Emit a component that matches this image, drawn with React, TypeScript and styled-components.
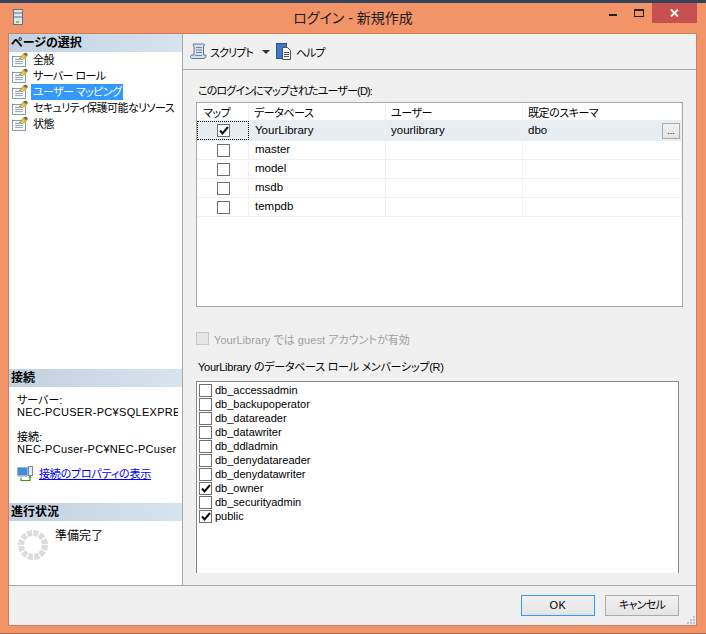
import React from 'react';
import styled, { createGlobalStyle } from 'styled-components';

const GlobalStyle = createGlobalStyle`
  html, body {
    margin: 0;
    padding: 0;
    background: #f39468;
  }
  * {
    box-sizing: border-box;
  }
`;

const Window = styled.div`
  width: 706px;
  height: 634px;
  display: flex;
  flex-direction: column;
  background: #f39468;
  border-top: 3px solid #34435a;
  border-bottom: 1px solid #a5684c;
  font-family: "Liberation Sans", "Noto Sans CJK JP", sans-serif;
  font-feature-settings: "palt";
  font-size: 11px;
  color: #000;
  overflow: hidden;
`;

const TitleBar = styled.div`
  height: 30px;
  flex: none;
  display: grid;
  grid-template-columns: 1fr auto 1fr;
  align-items: start;
`;

const TitleLeft = styled.div`
  padding: 6px 0 0 13px;
`;

const AppIcon = styled.svg`
  display: block;
  width: 10px;
  height: 16px;
`;

const TitleText = styled.div`
  font-size: 14px;
  line-height: 30px;
  color: #1b1b1b;
`;

const WindowButtons = styled.div`
  display: flex;
  justify-content: flex-end;
  align-items: flex-start;
  margin-right: 9px;
`;

const CaptionButton = styled.div<{ $w: number }>`
  width: ${props => props.$w}px;
  height: 20px;
  display: flex;
  align-items: center;
  justify-content: center;
`;

const CloseButton = styled.div`
  width: 45px;
  height: 20px;
  background: #c75050;
  display: flex;
  align-items: center;
  justify-content: center;
`;

const Client = styled.div`
  flex: 1;
  margin: 0 9px 7px 8px;
  display: flex;
  flex-direction: column;
  background: #f0f0f0;
  border: 1px solid #c9805f;
  min-height: 0;
`;

const Split = styled.div`
  flex: 1;
  display: flex;
  min-height: 0;
`;

const LeftPane = styled.div`
  width: 174px;
  flex: none;
  background: #fff;
  border-right: 1px solid #a9a9a9;
  display: flex;
  flex-direction: column;
`;

const SectionHeader = styled.div`
  height: 18px;
  flex: none;
  background: linear-gradient(to right, #c2d1df, #d7e3ef);
  font-weight: 700;
  font-size: 12px;
  line-height: 18px;
  padding-left: 2px;
`;

const NavList = styled.div`
  flex: 1;
  display: flex;
  flex-direction: column;
`;

const NavItem = styled.div`
  height: 16px;
  display: flex;
  align-items: center;
`;

const NavIcon = styled.svg`
  width: 17px;
  height: 16px;
  margin-left: 3px;
  margin-right: 2px;
  flex: none;
`;

const NavLabel = styled.span<{ $active?: boolean }>`
  font-size: 11px;
  letter-spacing: -0.6px;
  line-height: 16px;
  height: 16px;
  padding: 0 2px;
  white-space: nowrap;
  background: ${props => (props.$active ? '#3399ff' : 'transparent')};
  color: ${props => (props.$active ? '#fff' : '#000')};
`;

const ConnectionBody = styled.div`
  height: 116px;
  flex: none;
  padding: 7px 0 0 8px;
  font-size: 11px;
  line-height: 12px;
  overflow: hidden;
`;

const ConnLine = styled.div<{ $gap?: boolean }>`
  margin-top: ${props => (props.$gap ? '13px' : '0')};
  width: 161px;
  white-space: nowrap;
  overflow: hidden;
`;

const ConnValue = styled(ConnLine)`
  letter-spacing: 0.3px;
`;

const LinkRow = styled.div`
  display: flex;
  align-items: center;
  margin-top: 11px;
  gap: 6px;
`;

const PropLink = styled.a`
  color: #0000ff;
  text-decoration: underline;
  font-size: 11px;
  letter-spacing: -0.2px;
`;

const ProgressBody = styled.div`
  height: 64px;
  flex: none;
  display: flex;
  padding: 8px 0 0 9px;
  gap: 7px;
  font-size: 12px;
  line-height: 14px;
`;

const Spinner = styled.svg`
  width: 30px;
  height: 30px;
  margin-top: 1px;
  flex: none;
`;

const RightPane = styled.div`
  flex: 1;
  display: flex;
  flex-direction: column;
  min-width: 0;
`;

const Toolbar = styled.div`
  height: 36px;
  flex: none;
  display: flex;
  align-items: center;
  border-bottom: 1px solid #a9a9a9;
  padding-left: 7px;
  font-size: 11px;
  letter-spacing: -0.9px;
`;

const ToolIcon = styled.svg`
  width: 17px;
  height: 17px;
  flex: none;
`;

const ToolLabel = styled.span`
  margin-left: 3px;
`;

const DropArrow = styled.span`
  width: 0;
  height: 0;
  margin: 0 6px 0 9px;
  border-left: 4px solid transparent;
  border-right: 4px solid transparent;
  border-top: 4px solid #333;
`;

const Body = styled.div`
  flex: 1;
  display: flex;
  flex-direction: column;
  padding: 14px 0 0 13px;
  min-height: 0;
`;

const FieldLabel = styled.div`
  height: 18px;
  line-height: 14px;
  font-size: 11px;
  letter-spacing: -0.85px;
  padding-left: 2px;
  white-space: nowrap;
`;

const MapTable = styled.div`
  width: 487px;
  height: 205px;
  flex: none;
  background: #fff;
  border: 1px solid #a9a9a9;
`;

const Cols = styled.div<{ $head?: boolean; $selected?: boolean; $h: number }>`
  display: grid;
  grid-template-columns: 52px 137px 137px 1fr;
  height: ${props => props.$h}px;
  background: ${props => (props.$selected ? '#e8edf2' : '#fff')};
  border-bottom: 1px solid ${props => (props.$head ? '#e6eefa' : props.$selected ? '#e8edf2' : '#f0f0f0')};
`;

const Cell = styled.div<{ $db?: boolean }>`
  position: relative;
  display: flex;
  align-items: center;
  padding: 0 0 2px ${props => (props.$db ? '6px' : '5px')};
  border-right: 1px solid #f0f0f0;
  font-size: 11.5px;
  white-space: nowrap;
`;

const HeadCell = styled(Cell)<{ $first?: boolean }>`
  padding: 0 0 0 ${props => (props.$first ? '6px' : '5px')};
  font-size: 11px;
  letter-spacing: -0.45px;
`;

const CheckCell = styled.div<{ $focus?: boolean }>`
  display: flex;
  align-items: center;
  justify-content: center;
  padding-left: 2px;
  border-right: 1px solid #f0f0f0;
  outline: ${props => (props.$focus ? '1px dotted #000' : 'none')};
  outline-offset: -1px;
`;

const Box = styled.span<{ $size: number; $disabled?: boolean }>`
  width: ${props => props.$size}px;
  height: ${props => props.$size}px;
  flex: none;
  display: inline-flex;
  align-items: center;
  justify-content: center;
  background: ${props => (props.$disabled ? '#e6e6e6' : '#fff')};
  border: 1px solid ${props => (props.$disabled ? '#c8c8c8' : '#707070')};
`;

const Check = styled.svg`
  width: 10px;
  height: 9px;
`;

const EllipsisButton = styled.div`
  position: absolute;
  right: 1px;
  top: 2px;
  width: 18px;
  height: 16px;
  background: linear-gradient(#f0f0f0, #e5e5e5);
  border: 1px solid #acacac;
  font-size: 9px;
  line-height: 14px;
  text-align: center;
`;

const GuestRow = styled.div`
  display: flex;
  align-items: center;
  gap: 5px;
  height: 15px;
  margin-top: 24px;
  color: #a0a0a0;
  font-size: 11px;
  letter-spacing: 0.05px;
`;

const RoleLabel = styled(FieldLabel)`
  margin-top: 14px;
  height: 21px;
  letter-spacing: -0.25px;
`;

const RoleBox = styled.div`
  width: 483px;
  flex: 1;
  background: #fff;
  border: 1px solid #828790;
  border-bottom: none;
  padding: 1px 0 0 2px;
  margin-bottom: 12px;
`;

const RoleRow = styled.div`
  height: 14px;
  display: flex;
  align-items: center;
  gap: 3px;
  font-size: 11px;
`;

const Footer = styled.div`
  height: 40px;
  flex: none;
  border-top: 1px solid #a9a9a9;
  display: flex;
  align-items: flex-start;
  justify-content: flex-end;
  gap: 10px;
  padding: 9px 17px 0 0;
  position: relative;
`;

const Button = styled.div<{ $primary?: boolean }>`
  width: 74px;
  height: 21px;
  background: linear-gradient(#f0f0f0, #e5e5e5);
  border: 1px solid ${props => (props.$primary ? '#3399ff' : '#acacac')};
  text-align: center;
  font-size: 11px;
  letter-spacing: ${props => (props.$primary ? '0.5px' : '-0.7px')};
  line-height: 19px;
`;

const Grip = styled.svg`
  position: absolute;
  right: 1px;
  bottom: 1px;
  width: 9px;
  height: 9px;
`;

const roles = [
  { name: 'db_accessadmin', on: false },
  { name: 'db_backupoperator', on: false },
  { name: 'db_datareader', on: false },
  { name: 'db_datawriter', on: false },
  { name: 'db_ddladmin', on: false },
  { name: 'db_denydatareader', on: false },
  { name: 'db_denydatawriter', on: false },
  { name: 'db_owner', on: true },
  { name: 'db_securityadmin', on: false },
  { name: 'public', on: true },
];

const pages = ['全般', 'サーバー ロール', 'ユーザー マッピング', 'セキュリティ保護可能なリソース', '状態'];

const CheckMark = () => (
  <Check viewBox="0 0 10 9">
    <path d="M1 4.5 L3.5 7.5 L9 1" fill="none" stroke="#111" strokeWidth="2" />
  </Check>
);

const PageIcon = () => (
  <NavIcon viewBox="0 0 17 16">
    <rect x="0.5" y="4.5" width="13" height="10" fill="#f6f8fc" stroke="#8a9cb5" />
    <path d="M3 7.5h5M3 9.5h8M3 11.5h8" stroke="#9aaec8" />
    <path d="M7 7 L12 1.5 L15.5 3.5 L10.5 7.5 Z" fill="#edc93f" stroke="#9a8226" strokeWidth="0.7" />
    <path d="M11 2 L14 0.5 L16 2.5 L14 4 Z" fill="#6e6a48" />
  </NavIcon>
);

const App: React.FC = () => {
  return (
    <Window>
      <GlobalStyle />
      <TitleBar>
        <TitleLeft>
          <AppIcon viewBox="0 0 10 16">
            <rect x="0.5" y="0.5" width="9" height="15" fill="#dfe6ee" stroke="#5f7186" />
            <path d="M1 4h8M1 8h8" stroke="#5f7186" />
            <rect x="3" y="12" width="3" height="2" fill="#8fc06a" />
          </AppIcon>
        </TitleLeft>
        <TitleText>ログイン - 新規作成</TitleText>
        <WindowButtons>
          <CaptionButton $w={27}>
            <svg width="8" height="6"><rect width="8" height="2" y="4" fill="#222" /></svg>
          </CaptionButton>
          <CaptionButton $w={26}>
            <svg width="10" height="8"><rect x="0.5" y="0.5" width="9" height="7" fill="none" stroke="#222" /><rect width="10" height="2" fill="#222" /></svg>
          </CaptionButton>
          <CloseButton>
            <svg width="9" height="8" viewBox="0 0 9 8"><path d="M1 0.5 L8 7.5 M8 0.5 L1 7.5" stroke="#fff" strokeWidth="1.8" /></svg>
          </CloseButton>
        </WindowButtons>
      </TitleBar>
      <Client>
        <Split>
          <LeftPane>
            <SectionHeader>ページの選択</SectionHeader>
            <NavList>
              {pages.map((p, i) => (
                <NavItem key={p}>
                  <PageIcon />
                  <NavLabel $active={i === 2}>{p}</NavLabel>
                </NavItem>
              ))}
            </NavList>
            <SectionHeader>接続</SectionHeader>
            <ConnectionBody>
              <ConnLine>サーバー:</ConnLine>
              <ConnValue>NEC-PCUSER-PC¥SQLEXPRESS</ConnValue>
              <ConnLine $gap>接続:</ConnLine>
              <ConnValue>NEC-PCuser-PC¥NEC-PCuser</ConnValue>
              <LinkRow>
                <svg width="16" height="16" viewBox="0 0 16 16">
                  <rect x="0.5" y="1.5" width="10" height="8" fill="#3f8be0" stroke="#9db0c6" />
                  <rect x="1" y="9.5" width="9" height="1.5" fill="#b8c6d8" />
                  <rect x="11.5" y="0.5" width="4" height="9" fill="#e6ebf1" stroke="#7c8ca0" />
                  <path d="M4 11.5v3h9v-4" fill="none" stroke="#2f9a12" strokeWidth="1.2" />
                  <path d="M11 11.5l2-2 2 2" fill="#2f9a12" />
                </svg>
                <PropLink>接続のプロパティの表示</PropLink>
              </LinkRow>
            </ConnectionBody>
            <SectionHeader>進行状況</SectionHeader>
            <ProgressBody>
              <Spinner viewBox="0 0 30 30">
                <circle cx="15" cy="15" r="12" fill="none" stroke="#dcdcdc" strokeWidth="6" strokeDasharray="5 1.28" />
              </Spinner>
              <span>準備完了</span>
            </ProgressBody>
          </LeftPane>
          <RightPane>
            <Toolbar>
              <ToolIcon viewBox="0 0 17 17">
                <path d="M3 1h10.500c1.500 0 1.500 2 0 2v9h2.500c0 3-1.500 3.500-3 3.500H2c-2 0-2-3.500 0-3.500h2V4C4 3 3 2 3 1z" fill="#d6e0ec" stroke="#5f7a96" />
                <path d="M6 4.500h6M6 7h6M6 9.500h6M5 12.500h7" stroke="#6f8aa6" />
              </ToolIcon>
              <ToolLabel>スクリプト</ToolLabel>
              <DropArrow />
              <ToolIcon viewBox="0 0 17 17">
                <rect x="0.500" y="0.500" width="10" height="15" fill="#3f78c4" stroke="#2a5590" />
                <path d="M6.500 4.500h5l3 3v9h-8z" fill="#f6f8fb" stroke="#555" />
                <path d="M8 9.500h5M8 11.500h5M8 13.500h5" stroke="#555" />
              </ToolIcon>
              <ToolLabel>ヘルプ</ToolLabel>
            </Toolbar>
            <Body>
              <FieldLabel>このログインにマップされたユーザー(D):</FieldLabel>
              <MapTable>
                <Cols $head $h={18}>
                  <HeadCell $first>マップ</HeadCell>
                  <HeadCell>データベース</HeadCell>
                  <HeadCell>ユーザー</HeadCell>
                  <HeadCell>既定のスキーマ</HeadCell>
                </Cols>
                <Cols $selected $h={20}>
                  <CheckCell $focus><Box $size={13}><CheckMark /></Box></CheckCell>
                  <Cell $db>YourLibrary</Cell>
                  <Cell>yourlibrary</Cell>
                  <Cell>dbo<EllipsisButton>...</EllipsisButton></Cell>
                </Cols>
                {['master', 'model', 'msdb', 'tempdb'].map(db => (
                  <Cols key={db} $h={19}>
                    <CheckCell><Box $size={13} /></CheckCell>
                    <Cell $db>{db}</Cell>
                    <Cell />
                    <Cell />
                  </Cols>
                ))}
              </MapTable>
              <GuestRow>
                <Box $size={13} $disabled />
                YourLibrary では guest アカウントが有効
              </GuestRow>
              <RoleLabel>YourLibrary のデータベース ロール メンバーシップ(R)</RoleLabel>
              <RoleBox>
                {roles.map(r => (
                  <RoleRow key={r.name}>
                    <Box $size={13}>{r.on && <CheckMark />}</Box>
                    {r.name}
                  </RoleRow>
                ))}
              </RoleBox>
            </Body>
          </RightPane>
        </Split>
        <Footer>
          <Button $primary>OK</Button>
          <Button>キャンセル</Button>
          <Grip viewBox="0 0 9 9">
            <path d="M7 1h2v2H7zM4 4h2v2H4zM7 4h2v2H7zM1 7h2v2H1zM4 7h2v2H4zM7 7h2v2H7z" fill="#c4c4c4" />
          </Grip>
        </Footer>
      </Client>
    </Window>
  );
};

export default App;
